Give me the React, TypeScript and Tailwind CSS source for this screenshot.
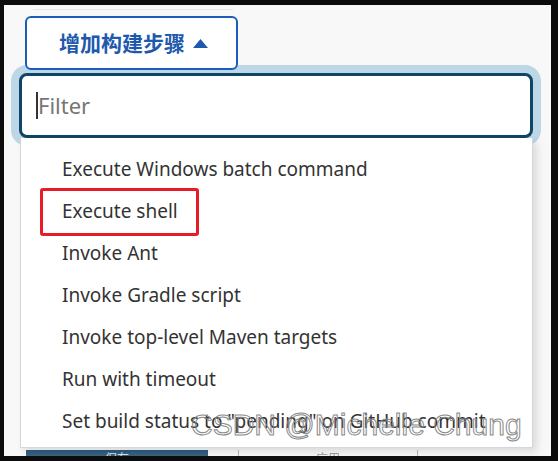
const items = [
  'Execute Windows batch command',
  'Execute shell',
  'Invoke Ant',
  'Invoke Gradle script',
  'Invoke top-level Maven targets',
  'Run with timeout',
  'Set build status to "pending" on GitHub commit',
]

export default function App() {
  return (
    <div className="w-[558px] h-[461px] bg-[#0c0c0c] pt-[5px] pl-[4px] pr-[7px] pb-[5px]">
      <div className="relative h-full bg-[#f8f8f8] overflow-hidden font-['Noto_Sans','Noto_Sans_CJK_SC',sans-serif]">
        <div className="absolute left-[29px] top-[4px] w-[200px] h-px bg-[#e3e8ee]" />
        <button className="relative z-10 ml-[21px] mt-[11px] w-[213px] h-[54px] flex items-center justify-center gap-[8px] pl-[4px] bg-white border-2 border-[#1d5cbb] rounded-[6px] text-[#1e59ad] text-[21px] font-bold">
          <span className="font-['Noto_Sans_CJK_SC',sans-serif]">增加构建步骤</span>
          <svg width="15" height="9" viewBox="0 0 15 9">
            <polygon points="7.5,0 15,9 0,9" fill="#1e59ad" />
          </svg>
        </button>
        <div className="ml-[15px] mt-[3px] w-[514px] h-[65px] rounded-[8px] border-[3px] border-[#0f4567] bg-white shadow-[0_0_0_8px_#bdd7e7] flex items-center pl-[14px]">
          <span className="w-[2px] h-[27px] bg-[#333]" />
          <span className="text-[22px] text-[#767676]">Filter</span>
        </div>
        <div className="relative z-10 ml-[16px] w-[513px] bg-white border border-[#d4d8dc] border-t-0 shadow-[4px_4px_8px_rgba(0,0,0,0.12)] pt-[10px] pb-[5px]">
          {items.map((t, i) => (
            <div key={t} className="relative h-[42px] flex items-center pl-[41px] text-[19px] text-[#333] whitespace-nowrap">
              {i === 1 && (
                <div className="absolute left-[19px] top-[-2px] w-[159px] h-[48px] border-[3px] border-[#e81c27] rounded-[3px]" />
              )}
              {t}
            </div>
          ))}
        </div>
        <div className="flex items-start mt-[2px] h-[20px]">
          <div className="ml-[22px] w-[182px] h-[20px] bg-gradient-to-b from-[#2c5a7e] to-[#5f8099] flex justify-center text-[12px] text-[#dce4ea]">保存</div>
          <div className="ml-[30px] w-px h-[20px] bg-[#b9b9b9]" />
          <div className="w-[178px] flex justify-center text-[12px] text-[#9a9a9a]">应用</div>
          <div className="w-px h-[20px] bg-[#b9b9b9]" />
        </div>
        <div className="absolute left-[187px] top-[397px] z-20 text-[30px] text-transparent [-webkit-text-stroke:1px_#8a8a8a] font-['Liberation_Sans',sans-serif] whitespace-nowrap">
          CSDN @Michelle Chung
        </div>
      </div>
    </div>
  )
}
